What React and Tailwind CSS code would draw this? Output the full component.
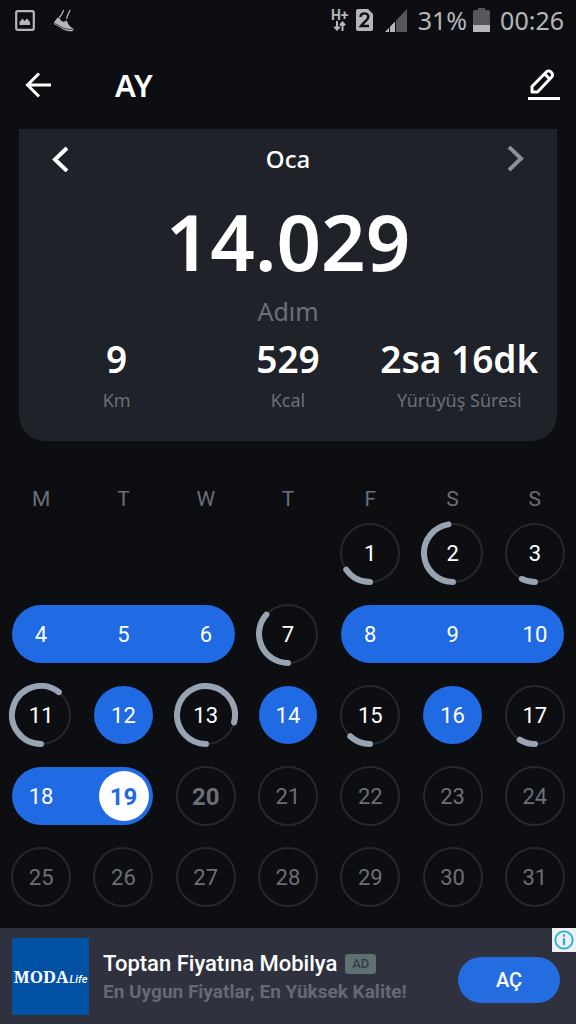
import { useState } from 'react';
import clsx from 'clsx';

const WEEKDAYS = ['M', 'T', 'W', 'T', 'F', 'S', 'S'];

const STATS = [
  { value: '9', label: 'Km' },
  { value: '529', label: 'Kcal' },
  { value: '2sa 16dk', label: 'Yürüyüş Süresi' },
];

// Days on which the goal was reached: position inside a streak
const STREAKS = {
  4: 'start', 5: 'middle', 6: 'end',
  8: 'start', 9: 'middle', 10: 'end',
  12: 'single', 14: 'single', 16: 'single',
  18: 'start', 19: 'end',
};

// Progress of the remaining days, in degrees from the bottom, clockwise
const PROGRESS = { 1: 55, 2: 171, 3: 27, 7: 132, 11: 218, 13: 285, 15: 43, 17: 32 };

const TODAY = 19;
const FIRST_DAY_OFFSET = 4;
const DAYS = Array.from({ length: 31 }, (_, i) => i + 1);

function StatusBar() {
  return (
    <div className="flex h-10 items-center justify-between pl-[15px] pr-3 text-[#b4b6b9]">
      <div className="flex items-center gap-[18px]">
        <svg width="20" height="21" viewBox="0 0 20 21" fill="none">
          <rect x="1.2" y="1.2" width="17.6" height="18.6" rx="1.5" stroke="currentColor" strokeWidth="2.2" />
          <path d="M4.500 15v-3l3-3.500 2 2.500 2.500-2.500 3 3.500v3z" fill="currentColor" />
        </svg>
        <svg width="22" height="23" viewBox="0 0 22 23">
          <path d="M10.500 1C10 4 8 6.500 6 9M17 1c-.5 3-3.500 5-3.200 9" stroke="currentColor" strokeWidth="1.3" fill="none" />
          <path d="M4.500 8.500 1 13.500l.5 2c3 1.500 8 4.500 11 6 2.500.8 5 .8 7.500.5l.5-2.500c-3-1-5-3.500-6-6l-1-2.500-1.500 1.500c-2.500.5-4-.5-5-2.500z" fill="currentColor" />
          <path d="M2 14.500c4 2 7.500 4.500 11 5.500 2 .5 5 .5 7 .3" stroke="#0c0e12" strokeWidth=".7" fill="none" />
        </svg>
      </div>
      <div className="flex items-center">
        <div className="flex w-[18px] flex-col items-center font-[Roboto] text-[14px] font-bold leading-[12px]">
          <span>H+</span>
          <svg width="13" height="10" viewBox="0 0 13 10" fill="none" stroke="currentColor" strokeWidth="2">
            <path d="M4 0v8.500M1.300 5.800 4 8.500l2.700-2.700M9.500 10V1.500M6.900 4.200l2.600-2.700 2.600 2.700" />
          </svg>
        </div>
        <svg className="ml-[7px]" width="17" height="22" viewBox="0 0 17 22">
          <path d="M2 0h10l5 5v15a2 2 0 0 1-2 2H2a2 2 0 0 1-2-2V2a2 2 0 0 1 2-2z" fill="currentColor" />
          <path d="M4.500 8c0-5 7.800-4.600 7.800-.3 0 3-4.300 5.200-7.300 9.300h8" stroke="#0c0e12" strokeWidth="2.400" fill="none" />
        </svg>
        <svg className="ml-3" width="22" height="23" viewBox="0 0 22 23">
          <path d="M22 0v23H11V11.500z" fill="#55575a" />
          <path d="M0 23l4-4.200V23zM5 17.800l5-5.200V23H5z" fill="currentColor" />
        </svg>
        <span className="ml-[11px] font-['Noto_Sans',sans-serif] text-[25px] leading-8">31%</span>
        <svg className="ml-[6px]" width="17" height="24" viewBox="0 0 17 24">
          <path d="M5 0h7v2h3a2 2 0 0 1 2 2v14H0V4a2 2 0 0 1 2-2h3z" fill="#55575a" />
          <path d="M0 17h17v7H0z" fill="currentColor" />
        </svg>
        <span className="ml-[10px] font-['Noto_Sans',sans-serif] text-[25px] leading-8">00:26</span>
      </div>
    </div>
  );
}

function Header() {
  return (
    <header className="flex h-[89px] items-center px-4">
      <button type="button" aria-label="Geri" className="flex h-12 w-12 items-center pl-[9px]">
        <svg width="28" height="26" viewBox="0 0 28 26" fill="none" stroke="currentColor" strokeWidth="3">
          <path d="M26 13H3M14 1.500 2.500 13 14 24.500" />
        </svg>
      </button>
      <h1 className="ml-[51px] flex-1 font-['Noto_Sans',sans-serif] text-[31px] font-semibold leading-10">AY</h1>
      <button type="button" aria-label="Düzenle">
        <svg width="32" height="34" viewBox="0 0 32 34" fill="none" stroke="currentColor">
          <path d="M4 24v-5.500L18.500 3.800a3 3 0 0 1 4.200 0l1 1a3 3 0 0 1 0 4.200L9.500 24zM16.500 5.800l5.200 5.200" strokeWidth="3" strokeLinejoin="round" />
          <path d="M0 30.500h32" strokeWidth="3" />
        </svg>
      </button>
    </header>
  );
}

function SummaryCard() {
  return (
    <section className="mx-[19px] h-[312px] rounded-b-[26px] bg-[#1f2229] font-['Noto_Sans',sans-serif]">
      <div className="flex h-[60px] items-center justify-between px-[31px]">
        <button type="button" aria-label="Önceki ay">
          <svg width="20" height="26" viewBox="0 0 20 26" fill="none" stroke="currentColor" strokeWidth="4">
            <path d="M17 2 5 13.500 17 25" />
          </svg>
        </button>
        <h2 className="text-2xl font-medium">Oca</h2>
        <button type="button" aria-label="Sonraki ay" className="text-[#8d8f93]">
          <svg width="20" height="26" viewBox="0 0 20 26" fill="none" stroke="currentColor" strokeWidth="4">
            <path d="M3 1 15 12.500 3 24" />
          </svg>
        </button>
      </div>
      <p className="mt-[6px] text-center text-[78px] font-semibold leading-[92px]">14.029</p>
      <p className="mt-2 text-center text-[25px] leading-8 text-[#6c6f76]">Adım</p>
      <dl className="mt-[3px] grid grid-cols-3 px-3">
        {STATS.map((stat) => (
          <div key={stat.label} className="flex flex-col-reverse text-center">
            <dt className="text-[18px] leading-6 text-[#6c6f76]">{stat.label}</dt>
            <dd className="whitespace-nowrap py-1 text-[37px] font-semibold leading-[50px]">{stat.value}</dd>
          </div>
        ))}
      </dl>
    </section>
  );
}

function ProgressRing({ degrees }) {
  const rad = (degrees * Math.PI) / 180;
  const x = 32 - 29 * Math.sin(rad);
  const y = 32 + 29 * Math.cos(rad);
  return (
    <svg width="64" height="64" viewBox="0 0 64 64" fill="none" className="col-start-1 row-start-1">
      <circle cx="32" cy="32" r="29" stroke="#26282c" strokeWidth="2" />
      {degrees > 0 && (
        <path
          d={`M32 61A29 29 0 ${degrees > 180 ? 1 : 0} 1 ${x} ${y}`}
          stroke="#98a4b2"
          strokeWidth="6"
          strokeLinecap="round"
        />
      )}
    </svg>
  );
}

function Day({ day, selected, onSelect }) {
  const streak = STREAKS[day];

  if (streak) {
    return (
      <button
        type="button"
        onClick={() => onSelect(day)}
        className={clsx(
          'flex h-[58px] items-center self-center bg-[#206ae3]',
          streak === 'start' && 'ml-3 justify-start rounded-l-full',
          streak === 'middle' && 'justify-center',
          streak === 'end' && 'mr-3 justify-end rounded-r-full',
          streak === 'single' && 'mx-3 justify-center rounded-full'
        )}
      >
        <span className="flex w-[58px] justify-center">
          <span
            className={clsx(
              'flex h-[50px] w-[50px] items-center justify-center rounded-full pt-[2px]',
              selected && 'bg-white text-2xl font-bold text-[#206ae3]'
            )}
          >
            {day}
          </span>
        </span>
      </button>
    );
  }

  return (
    <button
      type="button"
      onClick={() => onSelect(day)}
      className={clsx(
        'grid place-items-center self-center justify-self-center',
        day > TODAY && 'text-[#6c6f76]',
        day === TODAY + 1 && 'text-2xl font-bold'
      )}
    >
      <ProgressRing degrees={PROGRESS[day] || 0} />
      <span className="col-start-1 row-start-1 pt-[2px]">{day}</span>
    </button>
  );
}

function Calendar() {
  const [selected, setSelected] = useState(TODAY);

  return (
    <section className="mt-[43px] font-[Roboto,sans-serif] text-[22px]">
      <div className="grid h-7 grid-cols-7 items-center text-center text-[21px] text-[#6c6f76]">
        {WEEKDAYS.map((name, i) => (
          <span key={i}>{name}</span>
        ))}
      </div>
      <div className="grid auto-rows-[81px] grid-cols-7">
        <div style={{ gridColumn: `span ${FIRST_DAY_OFFSET}` }} />
        {DAYS.map((day) => (
          <Day key={day} day={day} selected={day === selected} onSelect={setSelected} />
        ))}
      </div>
    </section>
  );
}

function AdBanner() {
  return (
    <aside className="relative mt-auto flex h-24 items-center bg-[#2f313e] pl-3 pr-4 font-[Roboto,sans-serif]">
      <div className="flex h-[77px] w-[77px] shrink-0 items-baseline justify-center gap-px bg-[#0151a4] leading-[77px]">
        <span className="font-['Noto_Serif','Liberation_Serif',serif] text-[17px] font-bold">MODA</span>
        <span className="text-[11px] font-medium italic">Life</span>
      </div>
      <div className="ml-[14px] min-w-0 flex-1 pt-[2px]">
        <div className="flex items-center gap-2">
          <span className="whitespace-nowrap text-[22px] font-medium leading-[30px]">Toptan Fiyatına Mobilya</span>
          <span className="flex h-5 w-[31px] items-center justify-center rounded-[3px] bg-[#5e706f] text-[13px] font-medium text-[#343d45]">
            AD
          </span>
        </div>
        <p className="whitespace-nowrap text-[19px] font-bold leading-[26px] text-[#666975]">
          En Uygun Fiyatlar, En Yüksek Kalite!
        </p>
      </div>
      <button type="button" className="mt-2 h-[46px] w-[102px] shrink-0 rounded-full bg-[#246de0] text-xl font-medium">
        AÇ
      </button>
      <button type="button" aria-label="Reklam bilgisi" className="absolute right-0 top-0 flex h-6 w-6 items-center justify-center bg-[#eeeff0]">
        <svg width="20" height="20" viewBox="0 0 20 20" fill="none" stroke="#20b3cf">
          <circle cx="10" cy="10" r="8.700" strokeWidth="1.800" />
          <path d="M10 8.300V15M10 4.500v2.200" strokeWidth="2.200" />
        </svg>
      </button>
    </aside>
  );
}

export default function App() {
  return (
    <div className="flex min-h-screen flex-col bg-[#0c0e12] text-white">
      <StatusBar />
      <Header />
      <SummaryCard />
      <Calendar />
      <AdBanner />
    </div>
  );
}
